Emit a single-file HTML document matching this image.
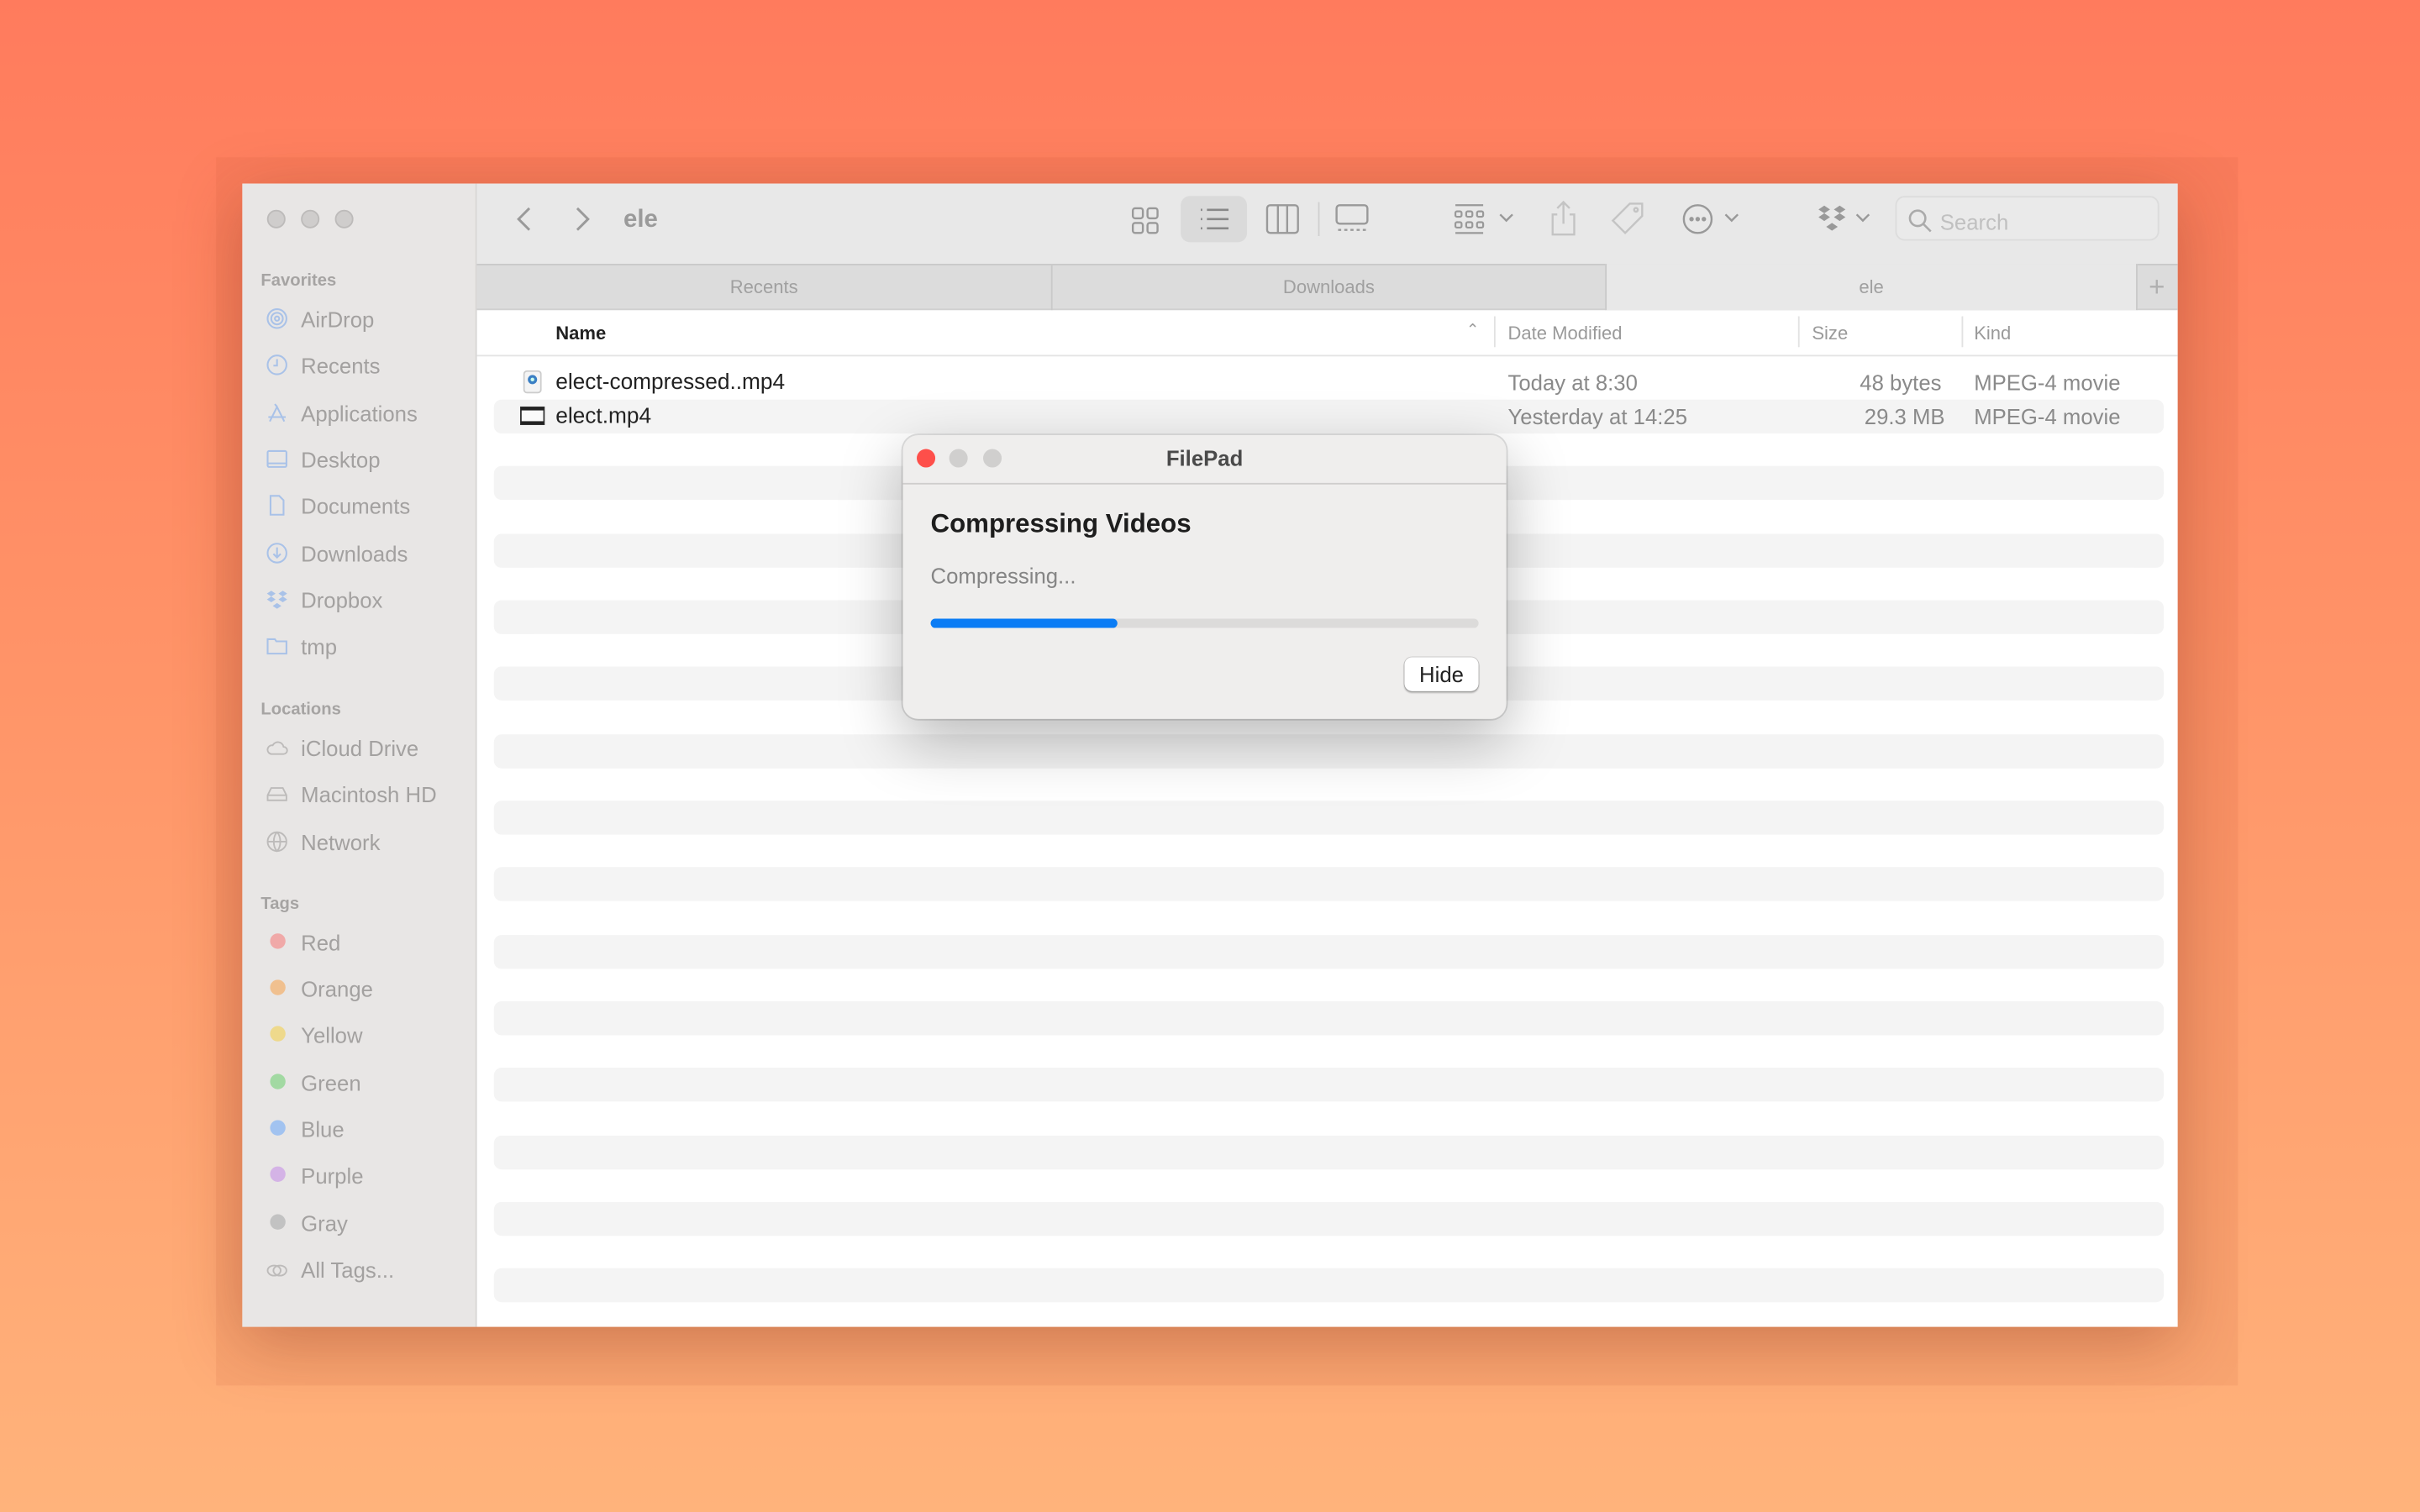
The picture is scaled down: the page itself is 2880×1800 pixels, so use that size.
<!DOCTYPE html>
<html><head><meta charset="utf-8"><style>
html,body{margin:0;padding:0;width:2880px;height:1800px;overflow:hidden}
body{background:linear-gradient(180deg,#ff7b5d 0%,#ff9468 45%,#ffb37b 100%);font-family:"Liberation Sans",sans-serif}
#s{position:absolute;left:0;top:0;width:1568px;height:980px;transform:scale(1.83674);transform-origin:0 0}
.a{position:absolute}
.shadowbox{left:140px;top:102px;width:1310px;height:796px;background:rgba(190,80,50,.10)}
.win{left:157px;top:119px;width:1254px;height:741px;background:#fff;box-shadow:0 10px 40px rgba(120,40,20,.35);overflow:hidden}
.side{left:0;top:0;width:151px;height:741px;background:#e8e6e5;border-right:1px solid #d8d6d5}
.tl{width:12px;height:12px;border-radius:50%;background:#cfcdcc;border:1px solid #bdbbba;box-sizing:border-box}
.sh{font-size:11px;font-weight:bold;color:#a6a4a3;left:12px}
.si{font-size:14px;color:#a3a1a0;left:38px}
.ic{left:15px;width:15px;height:15px}
.dot{left:18px;width:10px;height:10px;border-radius:50%}
.tb{left:152px;top:0;width:1102px;height:52px;background:#e8e8e8}
.tabs{left:152px;top:52px;width:1102px;height:30px;background:#dcdcdc;border-top:1px solid #c9c9c9;border-bottom:1px solid #d0d0d0;box-sizing:border-box}
.tab{top:0;height:29px;line-height:29px;text-align:center;font-size:12px;color:#a0a0a0}
.hdr{font-size:12px;color:#9a9a9a;top:90px}
.stripe{left:163px;width:1082px;height:22px;background:#f4f4f4;border-radius:5px}
.txt{font-size:14.3px;color:#222}
.g{font-size:14px;color:#8a8a8a}
.dlg{left:585px;top:282px;width:391px;height:184px;background:#efeeed;border-radius:10px;box-shadow:0 14px 40px rgba(0,0,0,.28),0 0 0 1px rgba(0,0,0,.12);overflow:hidden}
</style></head><body><div id="s">
<div class="a shadowbox"></div>
<div class="a win">
 <div class="a side">
  <div class="a tl" style="left:16px;top:17px"></div><div class="a tl" style="left:38px;top:17px"></div><div class="a tl" style="left:60px;top:17px"></div>
  <div class="a sh" style="top:57px">Favorites</div>
  <svg class="a ic" style="top:80px" viewBox="0 0 16 16" fill="none" stroke="#a9c2e8" stroke-width="1.2"><circle cx="8" cy="8" r="6.5"/><circle cx="8" cy="8" r="4"/><circle cx="8" cy="8" r="1.5"/></svg>
  <div class="a si" style="top:80px">AirDrop</div>
  <svg class="a ic" style="top:110px" viewBox="0 0 16 16" fill="none" stroke="#a9c2e8" stroke-width="1.2"><circle cx="8" cy="8" r="6.5"/><path d="M8 4v4.5H5.5"/></svg>
  <div class="a si" style="top:110px">Recents</div>
  <svg class="a ic" style="top:141px" viewBox="0 0 16 16" fill="none" stroke="#a9c2e8" stroke-width="1.2"><path d="M3 14 8 4l5 10M2 11h12M6.5 2 8 4"/></svg>
  <div class="a si" style="top:141px">Applications</div>
  <svg class="a ic" style="top:171px" viewBox="0 0 16 16" fill="none" stroke="#a9c2e8" stroke-width="1.2"><rect x="1.5" y="2.5" width="13" height="11" rx="1"/><path d="M1.5 11h13"/></svg>
  <div class="a si" style="top:171px">Desktop</div>
  <svg class="a ic" style="top:201px" viewBox="0 0 16 16" fill="none" stroke="#a9c2e8" stroke-width="1.2"><path d="M3.5 1.5h6l3 3v10h-9z"/></svg>
  <div class="a si" style="top:201px">Documents</div>
  <svg class="a ic" style="top:232px" viewBox="0 0 16 16" fill="none" stroke="#a9c2e8" stroke-width="1.2"><circle cx="8" cy="8" r="6.5"/><path d="M8 4v7M5.5 8.5 8 11l2.5-2.5"/></svg>
  <div class="a si" style="top:232px">Downloads</div>
  <svg class="a ic" style="top:262px" viewBox="0 0 16 16" fill="#a9c2e8"><path d="M4 2 1 4l3 2 3-2zM12 2 9 4l3 2 3-2zM4 6 1 8l3 2 3-2zM12 6 9 8l3 2 3-2zM8 10.5l-3 2 3 2 3-2z"/></svg>
  <div class="a si" style="top:262px">Dropbox</div>
  <svg class="a ic" style="top:292px" viewBox="0 0 16 16" fill="none" stroke="#a9c2e8" stroke-width="1.2"><path d="M1.5 3.5h5l1 1.5h7v8.5h-13z"/></svg>
  <div class="a si" style="top:292px">tmp</div>
  <div class="a sh" style="top:335px">Locations</div>
  <svg class="a ic" style="top:358px" viewBox="0 0 16 16" fill="none" stroke="#bdbbba" stroke-width="1.1"><path d="M4 12.5h8.5a2.5 2.5 0 0 0 0-5A4 4 0 0 0 5 6.5a3 3 0 0 0-1 6z"/></svg>
  <div class="a si" style="top:358px">iCloud Drive</div>
  <svg class="a ic" style="top:388px" viewBox="0 0 16 16" fill="none" stroke="#bdbbba" stroke-width="1.1"><path d="M4 4h8l2.5 5v3.5h-13V9z M1.5 9h13"/></svg>
  <div class="a si" style="top:388px">Macintosh HD</div>
  <svg class="a ic" style="top:419px" viewBox="0 0 16 16" fill="none" stroke="#bdbbba" stroke-width="1.1"><circle cx="8" cy="8" r="6.5"/><path d="M1.5 8h13M8 1.5c-3 3-3 10 0 13c3-3 3-10 0-13"/></svg>
  <div class="a si" style="top:419px">Network</div>
  <div class="a sh" style="top:461px">Tags</div>
  <div class="a dot" style="top:486px;background:#f0a9a8"></div><div class="a si" style="top:484px">Red</div>
  <div class="a dot" style="top:516px;background:#f0c08f"></div><div class="a si" style="top:514px">Orange</div>
  <div class="a dot" style="top:546px;background:#eed98c"></div><div class="a si" style="top:544px">Yellow</div>
  <div class="a dot" style="top:577px;background:#a2d9a2"></div><div class="a si" style="top:575px">Green</div>
  <div class="a dot" style="top:607px;background:#a2c3f0"></div><div class="a si" style="top:605px">Blue</div>
  <div class="a dot" style="top:637px;background:#d4b3e6"></div><div class="a si" style="top:635px">Purple</div>
  <div class="a dot" style="top:668px;background:#c2c2c2"></div><div class="a si" style="top:666px">Gray</div>
  <svg class="a ic" style="top:697px" viewBox="0 0 16 16" fill="none" stroke="#bdbbba" stroke-width="1.1"><ellipse cx="6" cy="8" rx="4.5" ry="3.5"/><ellipse cx="10" cy="8" rx="4.5" ry="3.5"/></svg>
  <div class="a si" style="top:696px">All Tags...</div>
 </div>
 <div class="a tb">
  <svg class="a" style="left:24px;top:14px" width="14" height="18" viewBox="0 0 14 18" fill="none" stroke="#9a9a9a" stroke-width="1.6"><path d="M10 2 3 9l7 7"/></svg>
  <svg class="a" style="left:61px;top:14px" width="14" height="18" viewBox="0 0 14 18" fill="none" stroke="#9a9a9a" stroke-width="1.6"><path d="M4 2l7 7-7 7"/></svg>
  <div class="a" style="left:95px;top:15px;font-size:16px;font-weight:bold;color:#9a9a9a">ele</div>
  <svg class="a" style="left:423px;top:14px" width="20" height="20" viewBox="0 0 20 20" fill="none" stroke="#999" stroke-width="1.3"><rect x="2" y="2" width="6.5" height="6.5" rx="1.5"/><rect x="11.5" y="2" width="6.5" height="6.5" rx="1.5"/><rect x="2" y="11.5" width="6.5" height="6.5" rx="1.5"/><rect x="11.5" y="11.5" width="6.5" height="6.5" rx="1.5"/></svg>
  <div class="a" style="left:456px;top:8px;width:43px;height:30px;background:#dadada;border-radius:6px"></div>
  <svg class="a" style="left:467px;top:13px" width="22" height="20" viewBox="0 0 22 20" fill="none" stroke="#888" stroke-width="1.4"><path d="M2 4h1M2 10h1M2 16h1M6 4h14M6 10h14M6 16h14"/></svg>
  <svg class="a" style="left:510px;top:12px" width="24" height="22" viewBox="0 0 24 22" fill="none" stroke="#999" stroke-width="1.3"><rect x="2" y="2" width="20" height="18" rx="2"/><path d="M9 2v18M15 2v18"/></svg>
  <div class="a" style="left:545px;top:12px;width:1px;height:22px;background:#d0d0d0"></div>
  <svg class="a" style="left:555px;top:12px" width="24" height="22" viewBox="0 0 24 22" fill="none" stroke="#999" stroke-width="1.3"><rect x="2" y="2" width="20" height="12" rx="2"/><path d="M3 18h2M7 18h2M11 18h2M15 18h2M19 18h2"/></svg>
  <svg class="a" style="left:632px;top:12px" width="24" height="22" viewBox="0 0 24 22" fill="none" stroke="#999" stroke-width="1.2"><path d="M2 2h18M2 20h18"/><rect x="2" y="6" width="4" height="3.5" rx="1"/><rect x="9" y="6" width="4" height="3.5" rx="1"/><rect x="16" y="6" width="4" height="3.5" rx="1"/><rect x="2" y="13" width="4" height="3.5" rx="1"/><rect x="9" y="13" width="4" height="3.5" rx="1"/><rect x="16" y="13" width="4" height="3.5" rx="1"/></svg>
  <svg class="a" style="left:662px;top:18px" width="10" height="8" viewBox="0 0 10 8" fill="none" stroke="#999" stroke-width="1.3"><path d="M1 2l4 4 4-4"/></svg>
  <svg class="a" style="left:694px;top:10px" width="20" height="26" viewBox="0 0 20 26" fill="none" stroke="#c4c4c4" stroke-width="1.3"><path d="M6 10H3v13h14V10h-3M10 2v14M6 6l4-4 4 4"/></svg>
  <svg class="a" style="left:734px;top:11px" width="24" height="24" viewBox="0 0 24 24" fill="none" stroke="#c4c4c4" stroke-width="1.3"><path d="M13 2h8v8L10 21 2 13z"/><circle cx="17" cy="6" r="1.2"/></svg>
  <svg class="a" style="left:780px;top:12px" width="22" height="22" viewBox="0 0 22 22" fill="none" stroke="#999" stroke-width="1.3"><circle cx="11" cy="11" r="9"/><circle cx="7" cy="11" r=".8" fill="#999"/><circle cx="11" cy="11" r=".8" fill="#999"/><circle cx="15" cy="11" r=".8" fill="#999"/></svg>
  <svg class="a" style="left:808px;top:18px" width="10" height="8" viewBox="0 0 10 8" fill="none" stroke="#999" stroke-width="1.3"><path d="M1 2l4 4 4-4"/></svg>
  <svg class="a" style="left:868px;top:13px" width="20" height="20" viewBox="0 0 16 16" fill="#999"><path d="M4 1 1 3l3 2 3-2zM12 1 9 3l3 2 3-2zM4 5 1 7l3 2 3-2zM12 5 9 7l3 2 3-2zM8 10l-3 2 3 2 3-2z"/></svg>
  <svg class="a" style="left:893px;top:18px" width="10" height="8" viewBox="0 0 10 8" fill="none" stroke="#999" stroke-width="1.3"><path d="M1 2l4 4 4-4"/></svg>
  <div class="a" style="left:919px;top:8px;width:171px;height:29px;border:1px solid #dcdcdc;border-radius:6px;box-sizing:border-box;background:#eaeaea"></div>
  <svg class="a" style="left:927px;top:16px" width="16" height="16" viewBox="0 0 16 16" fill="none" stroke="#aaa" stroke-width="1.4"><circle cx="6.5" cy="6.5" r="5"/><path d="M10 10l5 5"/></svg>
  <div class="a" style="left:948px;top:17px;font-size:14px;color:#c0c0c0">Search</div>
 </div>
 <div class="a tabs">
  <div class="a tab" style="left:0;width:372px;border-right:1px solid #c9c9c9">Recents</div>
  <div class="a tab" style="left:373px;width:358px">Downloads</div>
  <div class="a tab" style="left:731px;width:343px;background:#e8e8e8;border-left:1px solid #c9c9c9;border-right:1px solid #c9c9c9;height:30px;top:-1px;line-height:31px">ele</div>
  <div class="a tab" style="left:1075px;width:27px;font-size:18px;color:#b0b0b0">+</div>
 </div>
 <div class="a" style="left:152px;top:111px;width:1102px;height:1px;background:#e4e4e4"></div>
 <div class="a hdr" style="left:203px;color:#222;font-weight:bold">Name</div>
 <div class="a hdr" style="left:793px;font-size:10px">&#8963;</div>
 <div class="a" style="left:811px;top:86px;width:1px;height:20px;background:#e2e2e2"></div>
 <div class="a hdr" style="left:820px">Date Modified</div>
 <div class="a" style="left:1008px;top:86px;width:1px;height:20px;background:#e2e2e2"></div>
 <div class="a hdr" style="left:1017px">Size</div>
 <div class="a" style="left:1114px;top:86px;width:1px;height:20px;background:#e2e2e2"></div>
 <div class="a hdr" style="left:1122px">Kind</div>

 <div class="a stripe" style="top:140px"></div>
 <div class="a stripe" style="top:183.3px"></div>
 <div class="a stripe" style="top:226.7px"></div>
 <div class="a stripe" style="top:270px"></div>
 <div class="a stripe" style="top:313.3px"></div>
 <div class="a stripe" style="top:356.7px"></div>
 <div class="a stripe" style="top:400px"></div>
 <div class="a stripe" style="top:443.3px"></div>
 <div class="a stripe" style="top:486.7px"></div>
 <div class="a stripe" style="top:530px"></div>
 <div class="a stripe" style="top:573.3px"></div>
 <div class="a stripe" style="top:616.7px"></div>
 <div class="a stripe" style="top:660px"></div>
 <div class="a stripe" style="top:703.3px"></div>

 <svg class="a" style="left:182px;top:121px" width="12" height="15" viewBox="0 0 12 15"><rect x=".5" y=".5" width="11" height="14" rx="2" fill="#f4f4f4" stroke="#ccc"/><circle cx="6" cy="6" r="3" fill="#3b7fc4"/><circle cx="6" cy="6" r="1.2" fill="#cfe"/></svg>
 <div class="a txt" style="left:203px;top:121px">elect-compressed..mp4</div>
 <div class="a g" style="left:820px;top:121px">Today at 8:30</div>
 <div class="a g" style="left:1048px;top:121px">48 bytes</div>
 <div class="a g" style="left:1122px;top:121px">MPEG-4 movie</div>
 <svg class="a" style="left:180px;top:144px" width="16" height="13" viewBox="0 0 16 13"><rect x=".5" y="1" width="15" height="11" fill="#fafafa" stroke="#333"/><rect x=".5" y="1" width="15" height="2" fill="#222"/><rect x=".5" y="10" width="15" height="2" fill="#222"/></svg>
 <div class="a txt" style="left:203px;top:143px">elect.mp4</div>
 <div class="a g" style="left:820px;top:143px">Yesterday at 14:25</div>
 <div class="a g" style="left:1051px;top:143px">29.3 MB</div>
 <div class="a g" style="left:1122px;top:143px">MPEG-4 movie</div>
</div>

<div class="a dlg">
 <div class="a" style="left:0;top:0;width:391px;height:31px;border-bottom:1px solid #cfcecd"></div>
 <div class="a" style="left:9px;top:9px;width:12px;height:12px;border-radius:50%;background:#fe4f4a"></div>
 <div class="a" style="left:30px;top:9px;width:12px;height:12px;border-radius:50%;background:#d0cfce"></div>
 <div class="a" style="left:52px;top:9px;width:12px;height:12px;border-radius:50%;background:#d0cfce"></div>
 <div class="a" style="left:0;width:391px;top:7px;text-align:center;font-size:14px;font-weight:bold;color:#4a4a4a">FilePad</div>
 <div class="a" style="left:18px;top:48px;font-size:17px;font-weight:bold;color:#1d1d1d">Compressing Videos</div>
 <div class="a" style="left:18px;top:83px;font-size:14px;color:#858585">Compressing...</div>
 <div class="a" style="left:18px;top:119px;width:355px;height:6px;border-radius:3px;background:#dcdbda"></div>
 <div class="a" style="left:18px;top:119px;width:121px;height:6px;border-radius:3px;background:#0a7cf5"></div>
 <div class="a" style="left:325px;top:144px;width:48px;height:22px;border-radius:5px;background:#fff;box-shadow:0 1px 1px rgba(0,0,0,.25),0 0 0 .5px rgba(0,0,0,.15);text-align:center;line-height:22px;font-size:14px;color:#222">Hide</div>
</div>
</div></body></html>
